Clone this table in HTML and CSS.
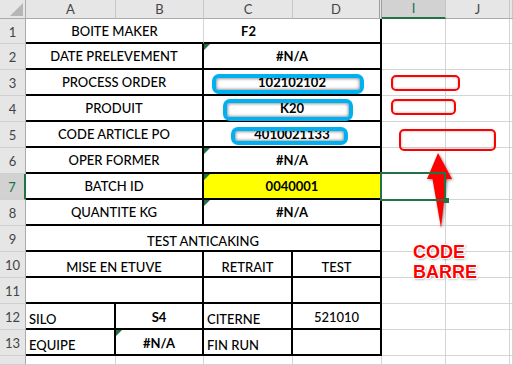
FILE: index.html
```html
<!DOCTYPE html>
<html lang="fr">
<head>
<meta charset="utf-8">
<title>Feuille</title>
<link rel="stylesheet" href="styles.css">
</head>
<body>
<div class="sheet">
  <div class="corner"><span class="corner-tri"></span></div>
  <div class="ch">A</div>
  <div class="ch">B</div>
  <div class="ch">C</div>
  <div class="ch ch-hid">D</div>
  <div class="ch ch-sel">I</div>
  <div class="ch">J</div>
  <div class="ch"></div>

  <div class="rh">1</div>
  <div class="c ab tb gr">BOITE MAKER</div>
  <div class="c tb b">F2</div>
  <div class="c tb tr"></div>
  <div class="g"></div><div class="g"></div><div class="g"></div>

  <div class="rh">2</div>
  <div class="c ab tb tr">DATE PRELEVEMENT</div>
  <div class="c cd tb tr b err">#N/A</div>
  <div class="g"></div><div class="g"></div><div class="g"></div>

  <div class="rh">3</div>
  <div class="c ab tb tr">PROCESS ORDER</div>
  <div class="c cd tb tr b">102102102</div>
  <div class="g"></div><div class="g"></div><div class="g"></div>

  <div class="rh">4</div>
  <div class="c ab tb tr">PRODUIT</div>
  <div class="c cd tb tr b">K20</div>
  <div class="g"></div><div class="g"></div><div class="g"></div>

  <div class="rh">5</div>
  <div class="c ab tb tr">CODE ARTICLE PO</div>
  <div class="c cd tb tr b">4010021133</div>
  <div class="g"></div><div class="g"></div><div class="g"></div>

  <div class="rh">6</div>
  <div class="c ab tb tr">OPER FORMER</div>
  <div class="c cd tb tr b err">#N/A</div>
  <div class="g"></div><div class="g"></div><div class="g"></div>

  <div class="rh rh-sel">7</div>
  <div class="c ab tb tr">BATCH ID</div>
  <div class="c cd tb tr b err yel">0040001</div>
  <div class="g"></div><div class="g"></div><div class="g"></div>

  <div class="rh">8</div>
  <div class="c ab tb tr">QUANTITE KG</div>
  <div class="c cd tb tr b err">#N/A</div>
  <div class="g"></div><div class="g"></div><div class="g"></div>

  <div class="rh">9</div>
  <div class="c ad tb tr bot">TEST ANTICAKING</div>
  <div class="g"></div><div class="g"></div><div class="g"></div>

  <div class="rh">10</div>
  <div class="c ab tb tr bot">MISE EN ETUVE</div>
  <div class="c tb tr bot">RETRAIT</div>
  <div class="c tb tr bot">TEST</div>
  <div class="g"></div><div class="g"></div><div class="g"></div>

  <div class="rh">11</div>
  <div class="c ab tb tr"></div>
  <div class="c tb tr"></div>
  <div class="c tb tr"></div>
  <div class="g"></div><div class="g"></div><div class="g"></div>

  <div class="rh">12</div>
  <div class="c tb tr bot left">SILO</div>
  <div class="c tb tr b mid">S4</div>
  <div class="c tb tr bot left">CITERNE</div>
  <div class="c tb tr mid">521010</div>
  <div class="g"></div><div class="g"></div><div class="g"></div>

  <div class="rh">13</div>
  <div class="c tb tr bot left">EQUIPE</div>
  <div class="c tb tr b err mid">#N/A</div>
  <div class="c tb tr bot left">FIN RUN</div>
  <div class="c tb tr"></div>
  <div class="g"></div><div class="g"></div><div class="g"></div>

  <div class="rh"></div>
  <div class="g"></div><div class="g"></div><div class="g"></div><div class="g"></div>
  <div class="g"></div><div class="g"></div><div class="g"></div>

  <div class="bshape bshape-po"></div>
  <div class="bshape bshape-prod"></div>
  <div class="bshape bshape-code"></div>

  <div class="rshape rshape-1"></div>
  <div class="rshape rshape-2"></div>
  <div class="rshape rshape-3"></div>

  <svg class="arrow" viewBox="424 150 32 82" width="32" height="82" aria-hidden="true">
    <polygon points="438,153 452,179 446.5,179 441,228 432.5,179 427,179" fill="#ff0000"/>
  </svg>

  <div class="callout">CODE<br>BARRE</div>

  <div class="selbox"></div>
  <div class="handle"></div>
</div>
</body>
</html>
```

FILE: styles.css
```css
* {
  box-sizing: border-box;
  margin: 0;
  padding: 0;
}

html, body {
  background: #ffffff;
}

body {
  margin: 0;
  font-family: Lato, "Noto Sans", sans-serif;
  font-size: 13px;
  font-weight: 500;
  color: #000000;
}

.sheet {
  position: relative;
  width: 513px;
  height: 365px;
  overflow: hidden;
  display: grid;
  grid-template-columns: 26px 90px 88px 89px 89px 64px 64px 1fr;
  grid-template-rows: 19px 25px repeat(12, 26px) 1fr;
  background: #ffffff;
}

/* headers */
.corner {
  background: #e6e6e6;
  border-right: 1px solid #ababab;
  border-bottom: 1px solid #ababab;
  display: flex;
  justify-content: flex-end;
  align-items: flex-end;
  padding: 0 2px 2px 0;
}

.corner-tri {
  width: 0;
  height: 0;
  border-left: 13px solid transparent;
  border-bottom: 13px solid #b6b6b6;
}

.ch {
  background: #e6e6e6;
  border-right: 1px solid #c6c6c6;
  border-bottom: 1px solid #ababab;
  display: flex;
  align-items: center;
  justify-content: center;
  color: #444444;
  font-size: 13px;
  font-weight: 400;
  line-height: 1;
}

.ch-hid {
  border-right: 3px double #9c9c9c;
}

.ch-sel {
  background: #d2d2d2;
  border-bottom: 2px solid #217346;
  color: #217346;
}

.rh {
  background: #e6e6e6;
  border-right: 1px solid #ababab;
  border-bottom: 1px solid #d0d0d0;
  display: flex;
  align-items: center;
  justify-content: center;
  color: #444444;
  font-size: 13px;
  font-weight: 400;
  line-height: 1;
  padding-top: 2px;
}

.rh-sel {
  background: #d2d2d2;
  border-right: 2px solid #217346;
  color: #217346;
}

/* table cells */
.c {
  position: relative;
  background: #ffffff;
  display: flex;
  align-items: center;
  justify-content: center;
  white-space: nowrap;
  line-height: 16px;
}

.ab, .cd {
  grid-column: span 2;
}

.ad {
  grid-column: span 4;
}

.tb {
  border-bottom: 2px solid #000000;
}

.tr {
  border-right: 2px solid #000000;
}

.gr {
  border-right: 1px solid #d4d4d4;
}

.b {
  font-weight: 700;
}

.yel {
  background: #ffff00;
}

.bot {
  align-items: flex-end;
  padding-bottom: 1px;
}

.mid {
  padding-top: 2px;
}

.left {
  justify-content: flex-start;
  padding-left: 3px;
}

.err::before {
  content: "";
  position: absolute;
  left: 0;
  top: 0;
  width: 0;
  height: 0;
  border-top: 6px solid #1e7145;
  border-right: 6px solid transparent;
}

.g {
  background: #ffffff;
  border-right: 1px solid #d4d4d4;
  border-bottom: 1px solid #d4d4d4;
}

/* drawing shapes */
.bshape {
  position: absolute;
  border: 4px solid #00b0f0;
  border-radius: 7px;
  box-shadow: inset 0 0 3px 1px rgba(0, 0, 0, 0.4);
}

.bshape-po {
  left: 212px;
  top: 74px;
  width: 152px;
  height: 20px;
}

.bshape-prod {
  left: 223px;
  top: 99px;
  width: 130px;
  height: 22px;
}

.bshape-code {
  left: 231px;
  top: 127px;
  width: 117px;
  height: 18px;
}

.rshape {
  position: absolute;
  border: 2px solid #ff0000;
  border-radius: 5px;
  box-shadow: inset 0 0 2px 1px rgba(0, 0, 0, 0.15);
}

.rshape-1 {
  left: 391px;
  top: 75px;
  width: 69px;
  height: 16px;
}

.rshape-2 {
  left: 391px;
  top: 99px;
  width: 65px;
  height: 16px;
}

.rshape-3 {
  left: 399px;
  top: 129px;
  width: 97px;
  height: 22px;
}

.arrow {
  position: absolute;
  left: 424px;
  top: 150px;
  filter: drop-shadow(1px 1px 1.5px rgba(0, 0, 0, 0.45));
}

.callout {
  position: absolute;
  left: 413px;
  top: 242px;
  font-family: "Liberation Sans", Arial, sans-serif;
  font-size: 18px;
  font-weight: 700;
  line-height: 20px;
  color: #ff0000;
  text-shadow:
    1px 0 0 #ffffff, -1px 0 0 #ffffff, 0 1px 0 #ffffff, 0 -1px 0 #ffffff,
    1px 1px 0 #ffffff, -1px -1px 0 #ffffff, 1px -1px 0 #ffffff, -1px 1px 0 #ffffff,
    1px 1px 3px rgba(0, 0, 0, 0.55);
}

.selbox {
  position: absolute;
  left: 380px;
  top: 172px;
  width: 66px;
  height: 29px;
  border: 2px solid #217346;
}

.handle {
  position: absolute;
  left: 444px;
  top: 198px;
  width: 5px;
  height: 5px;
  background: #217346;
}
```
